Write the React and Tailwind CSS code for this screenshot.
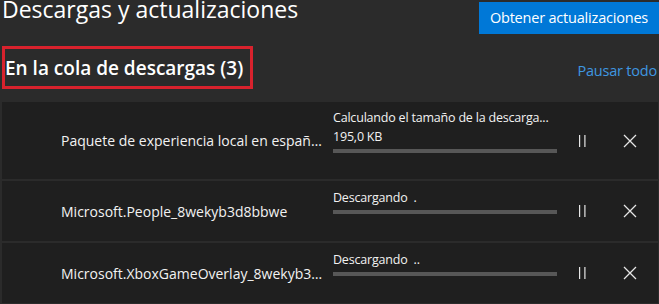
import React from "react";

const rows = [
  {
    name: "Paquete de experiencia local en español (España)",
    status: "Calculando el tamaño de la descarga...",
    size: "195,0 KB",
    h: "h-[77px]",
  },
  { name: "Microsoft.People_8wekyb3d8bbwe", status: "Descargando  .", h: "h-[60px]" },
  { name: "Microsoft.XboxGameOverlay_8wekyb3d8bbwe", status: "Descargando  ..", h: "h-[60px]" },
];

function PauseIcon() {
  return (
    <svg width="8" height="14" viewBox="0 0 8 14" className="block">
      <rect x="1" y="1" width="1.2" height="12" fill="#e6e6e6" />
      <rect x="6.3" y="1" width="1.2" height="12" fill="#e6e6e6" />
    </svg>
  );
}

function CloseIcon() {
  return (
    <svg width="14" height="14" viewBox="0 0 14 14" className="block">
      <path d="M1 1 L13 13 M13 1 L1 13" stroke="#e6e6e6" strokeWidth="1.3" fill="none" />
    </svg>
  );
}

export default function App() {
  return (
    <div
      className="w-[659px] h-[304px] overflow-hidden bg-[#2b2b2b] text-white"
      style={{ fontFamily: '"Segoe UI", "Open Sans", "Noto Sans", sans-serif' }}
    >
      <div className="flex items-start justify-between pl-[2px] pt-[2px]">
        <h1 className="text-[23px] leading-[23px] -mt-[4px]">Descargas y actualizaciones</h1>
        <button className="h-[32px] w-[180px] bg-[#0078d7] text-[14.5px] text-white flex items-center justify-center tracking-[-0.2px]">
          Obtener actualizaciones
        </button>
      </div>
      <div className="flex items-end justify-between pl-[2px] mt-[12px]">
        <div className="w-[251px] h-[43px] border-[3px] border-[#d8222d] flex items-center">
          <span className="text-[19px] leading-[24px] font-semibold">En la cola de descargas (3)</span>
        </div>
        <span className="text-[14.5px] text-[#3f97e0] mb-[7px] mr-[2px] tracking-[-0.2px]">Pausar todo</span>
      </div>
      <div className="flex flex-col gap-[2px] mt-[13px] ml-[2px] mr-[1px]">
        {rows.map((r, i) => (
          <div key={i} className={`flex items-center bg-[#1f1f1f] ${r.h}`}>
            <div className="w-[331px] pl-[59px] pr-[6px]">
              <div className="truncate text-[14px] text-[#f2f2f2]">{r.name}</div>
            </div>
            <div className="w-[224px] flex flex-col -mt-[20px]">
              <div className="text-[12.5px] leading-[19px] text-[#f2f2f2] whitespace-pre tracking-[-0.2px]">{r.status}</div>
              {r.size && <div className="text-[12.5px] leading-[19px] text-[#f2f2f2] tracking-[-0.2px]">{r.size}</div>}
              <div className="h-[4px] bg-[#575757] mt-[3px]" />
            </div>
            <div className="w-[43px] flex justify-end pr-[14px]">
              <PauseIcon />
            </div>
            <div className="w-[37px] flex justify-end">
              <CloseIcon />
            </div>
          </div>
        ))}
      </div>
    </div>
  );
}
